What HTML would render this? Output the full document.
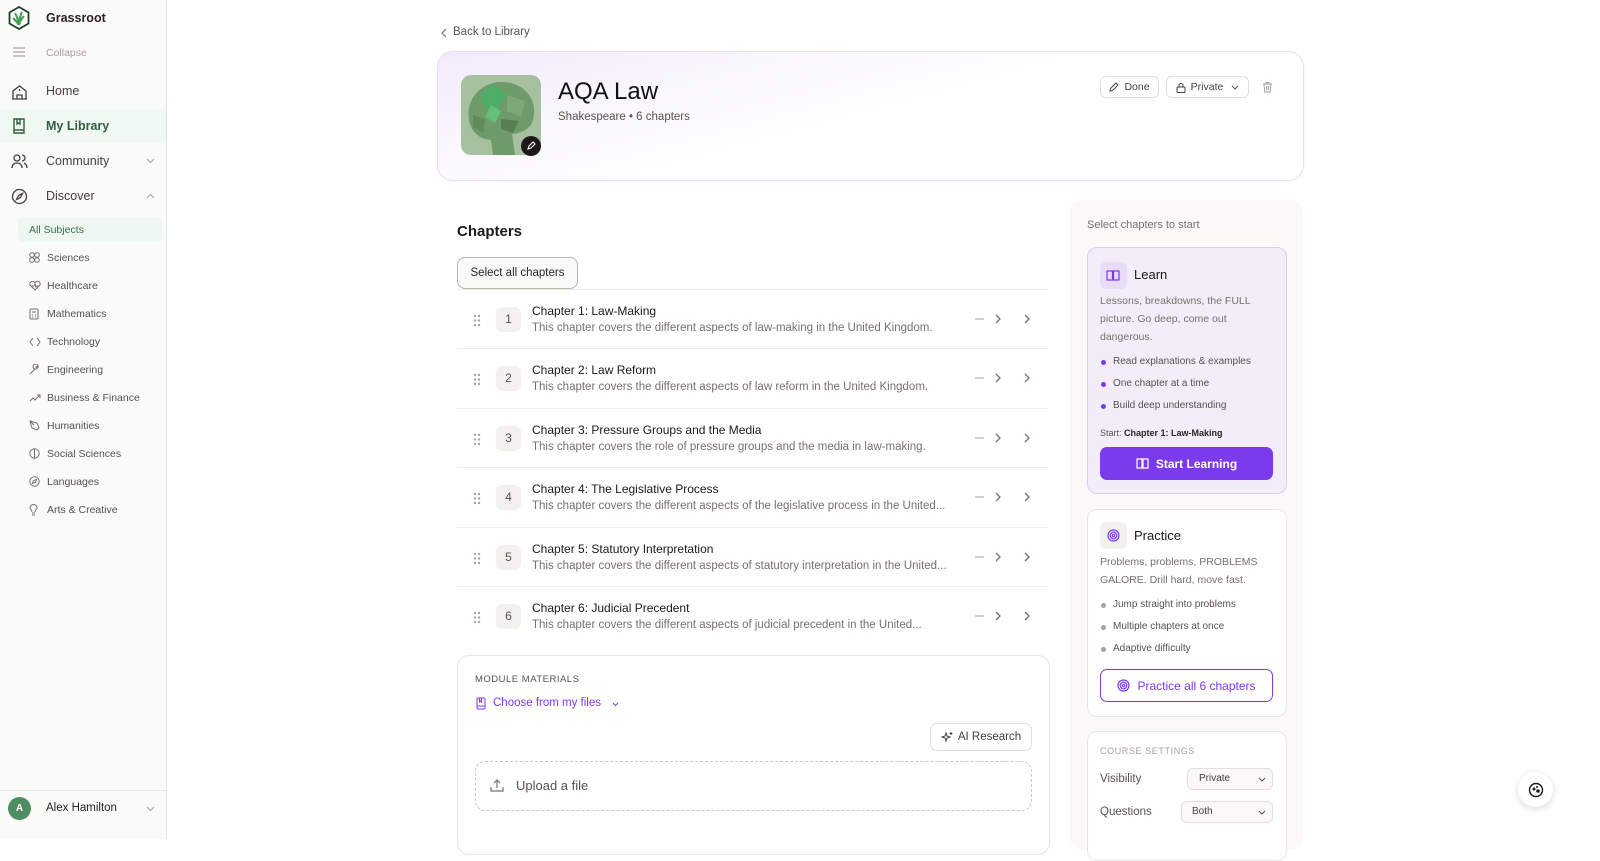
<!DOCTYPE html>
<html><head><meta charset="utf-8"><style>
*{box-sizing:border-box;margin:0;padding:0}
body{width:1600px;height:839px;overflow:hidden;background:#fff;font-family:"Liberation Sans",sans-serif;color:#1c1917;position:relative}
.a{position:absolute}
.sb{left:0;top:0;width:167px;height:839px;background:#fafaf9;border-right:1px solid #e7e5e4}
.nav{left:0;width:166px;height:34px;font-size:12.5px;color:#44403c;display:flex;align-items:center}
.nav span{position:absolute;left:46px}
.nav svg{position:absolute;left:11px}
.sub{left:18px;width:144px;height:25px;font-size:10.5px;color:#57534e;display:flex;align-items:center}
.sub span{position:absolute;left:29px}
.sub svg{position:absolute;left:11px}
.row{left:457px;width:591px;height:60px;border-top:1px solid #efedea}
.row .dr{position:absolute;left:16px;top:24px}
.row .n{position:absolute;left:39px;top:17px;width:25px;height:25px;background:#f3f1ee;border-radius:6px;font-size:12px;color:#57534e;text-align:center;line-height:25px}
.row .t{position:absolute;left:75px;top:14px;font-size:12px;color:#1c1917}
.row .d{position:absolute;left:75px;top:32px;font-size:11.5px;color:#78716c;white-space:nowrap}
.row .ic{position:absolute;left:516px;top:22px}
.btn{border:1px solid #e2dfdb;border-radius:6px;background:#fff;font-size:10.5px;color:#44403c;display:flex;align-items:center;justify-content:center;gap:5px}
.li{font-size:10px;color:#57534e;position:absolute;left:13px;white-space:nowrap}
.li:before{content:"";position:absolute;left:-12px;top:4px;width:5px;height:5px;border-radius:50%;background:#7c3aed}
.pr .li:before{background:#a8a29e}
</style></head><body>
<div class="a sb"></div>
<svg class="a" style="left:8px;top:6px" width="22" height="24" viewBox="0 0 22 24"><path d="M11 1L20.5 6.5V17.5L11 23L1.5 17.5V6.5Z" fill="#fff" stroke="#1f3d2b" stroke-width="1.8"/><path d="M11 19C10 14 9 10 7 7M11 19C11 14 12 10 14 6M11 19C12 15 14 12 16 10M11 19C9 16 7 14 5 12" stroke="#3f9d4f" stroke-width="2" fill="none"/></svg>
<div class="a" style="left:46px;top:11px;font-size:12.5px;font-weight:bold;color:#292524">Grassroot</div>
<svg class="a" style="left:13px;top:47px" width="12" height="10"><path d="M0 1H12M0 5H12M0 9H12" stroke="#a8a29e" stroke-width="1.2"/></svg>
<div class="a" style="left:46px;top:47px;font-size:10.5px;color:#a8a29e">Collapse</div>
<div class="a nav" style="top:74px"><svg width="17" height="17" viewBox="0 0 17 17" fill="none" stroke="#44403c" stroke-width="1.3"><path d="M2 16V8l6.5-5L15 8v8M6 16v-4h5v4M1 16h15M8.5 6v2"/></svg><span>Home</span></div>
<div class="a nav" style="top:109px;background:#f0f8f2;color:#2f5e3f;font-weight:bold"><svg width="16" height="16" viewBox="0 0 16 16" fill="none" stroke="#2f5e3f" stroke-width="1.4"><path d="M3 1h10v14H3zM3 12h10M6 1v5l1.5-1L9 6V1"/></svg><span>My Library</span></div>
<div class="a nav" style="top:144px"><svg width="17" height="16" viewBox="0 0 17 16" fill="none" stroke="#44403c" stroke-width="1.3"><circle cx="6" cy="5" r="3"/><path d="M1 15c0-3 2-5 5-5s5 2 5 5M11 2a3 3 0 010 6M13 10c2 1 3 3 3 5"/></svg><span>Community</span><svg style="left:146px" width="9" height="6"><path d="M1 1l3.5 3.5L8 1" stroke="#a8a29e" fill="none"/></svg></div>
<div class="a nav" style="top:179px"><svg width="17" height="17" viewBox="0 0 17 17" fill="none" stroke="#44403c" stroke-width="1.3"><circle cx="8.5" cy="8.5" r="7"/><path d="M11.5 5.5l-2 4-4 2 2-4z"/></svg><span>Discover</span><svg style="left:146px" width="9" height="6"><path d="M1 5l3.5-3.5L8 5" stroke="#a8a29e" fill="none"/></svg></div>
<div class="a sub" style="top:217px;background:#eef8f1;color:#3d6b4f;border-radius:5px"><span style="left:11px">All Subjects</span></div>
<div class="a sub" style="top:245px"><svg width="11" height="11" viewBox="0 0 11 11" fill="none" stroke="#78716c"><circle cx="3" cy="3" r="2.3"/><circle cx="8" cy="3" r="2.3"/><circle cx="3" cy="8" r="2.3"/><circle cx="8" cy="8" r="2.3"/></svg><span>Sciences</span></div>
<div class="a sub" style="top:273px"><svg width="12" height="10" viewBox="0 0 12 10" fill="none" stroke="#78716c"><path d="M6 9L1 4a2.5 2.5 0 015-2 2.5 2.5 0 015 2z M2 5h3l1-2 1 3 1-1h2"/></svg><span>Healthcare</span></div>
<div class="a sub" style="top:301px"><svg width="10" height="12" viewBox="0 0 10 12" fill="none" stroke="#78716c"><rect x="1" y="1" width="8" height="10" rx="1"/><path d="M3 4h4M3 7h1M6 7h1M3 9h1M6 9h1"/></svg><span>Mathematics</span></div>
<div class="a sub" style="top:329px"><svg width="12" height="10" viewBox="0 0 12 10" fill="none" stroke="#78716c"><path d="M4 1L1 5l3 4M8 1l3 4-3 4"/></svg><span>Technology</span></div>
<div class="a sub" style="top:357px"><svg width="11" height="11" viewBox="0 0 11 11" fill="none" stroke="#78716c"><path d="M1 10l5-5a2.5 2.5 0 113 -3l-2 1 1 1 1-2a2.5 2.5 0 01-3 3"/></svg><span>Engineering</span></div>
<div class="a sub" style="top:385px"><svg width="12" height="8" viewBox="0 0 12 8" fill="none" stroke="#78716c"><path d="M1 7l3-3 2 2 5-5M8 1h3v3"/></svg><span>Business &amp; Finance</span></div>
<div class="a sub" style="top:413px"><svg width="11" height="11" viewBox="0 0 11 11" fill="none" stroke="#78716c"><path d="M1 1l7 2 2 5-2 2-5-2zM1 1l4 4"/></svg><span>Humanities</span></div>
<div class="a sub" style="top:441px"><svg width="11" height="11" viewBox="0 0 11 11" fill="none" stroke="#78716c"><circle cx="5.5" cy="5.5" r="4.7"/><path d="M5.5 1v9"/></svg><span>Social Sciences</span></div>
<div class="a sub" style="top:469px"><svg width="11" height="11" viewBox="0 0 11 11" fill="none" stroke="#78716c"><circle cx="5.5" cy="5.5" r="4.7"/><path d="M7.5 3.5l-1 3-3 1 1-3z"/></svg><span>Languages</span></div>
<div class="a sub" style="top:497px"><svg width="9" height="12" viewBox="0 0 9 12" fill="none" stroke="#78716c"><path d="M3 9h3M3 11h3M3 8C3 6 1 5.5 1 4a3.5 3.5 0 017 0c0 1.5-2 2-2 4"/></svg><span>Arts &amp; Creative</span></div>
<div class="a" style="left:0;top:790px;width:166px;border-top:1px solid #e7e5e4"></div>
<div class="a" style="left:8px;top:797px;width:23px;height:23px;border-radius:50%;background:#4e8c64;color:#fff;font-size:10px;font-weight:bold;text-align:center;line-height:23px">A</div>
<div class="a" style="left:46px;top:802px;font-size:11.5px;color:#292524">Alex Hamilton</div>
<svg class="a" style="left:146px;top:806px" width="9" height="6"><path d="M1 1l3.5 3.5L8 1" stroke="#a8a29e" fill="none"/></svg>

<svg class="a" style="left:441px;top:28px" width="6" height="10"><path d="M5 1L1 5l4 4" stroke="#78716c" fill="none" stroke-width="1.2"/></svg>
<div class="a" style="left:453px;top:26px;font-size:11.5px;color:#57534e">Back to Library</div>

<div class="a" style="left:437px;top:51px;width:867px;height:130px;border:1px solid #e6dff3;border-radius:16px;background:linear-gradient(165deg,#f1eafb 0%,#faf8fe 30%,#fff 55%);box-shadow:0 1px 3px rgba(0,0,0,.04)"></div>
<div class="a" style="left:461px;top:75px;width:80px;height:80px;border-radius:10px;background:#a7c0a0;overflow:hidden"><svg width="80" height="80" viewBox="0 0 80 80"><path d="M8 45C4 25 20 6 42 7c20 1 33 15 31 33-1 12-10 18-22 19l3 21H32l-2-15C17 64 10 56 8 45z" fill="#6f9a6a"/><path d="M20 18l14-8 12 10-10 14-14-2z" fill="#4fae66"/><path d="M30 30l10 6-6 12-10-6z" fill="#63c07a"/><path d="M46 20l18 6-4 16-14-6z" fill="#7fa878"/><path d="M12 40l12 4-2 14-10-6z" fill="#5f8c5a"/><path d="M40 44l18 2-6 12-12-4z" fill="#577f52"/></svg></div>
<div class="a" style="left:521px;top:136px;width:20px;height:20px;border-radius:50%;background:#1c1917"><svg width="20" height="20"><path d="M7 13l1-3 4-4 2 2-4 4z" stroke="#fff" fill="none" stroke-width="1.1"/></svg></div>
<div class="a" style="left:558px;top:78px;font-size:24px;color:#111">AQA Law</div>
<div class="a" style="left:558px;top:111px;font-size:11.5px;color:#57534e">Shakespeare • 6 chapters</div>
<div class="a btn" style="left:1100px;top:76px;width:59px;height:22px"><svg width="10" height="10"><path d="M1 9l.5-2.5L7 1l2 2-5.5 5.5z" stroke="#44403c" fill="none"/></svg>Done</div>
<div class="a btn" style="left:1166px;top:76px;width:83px;height:22px"><svg width="10" height="11"><rect x="1" y="5" width="8" height="5.5" rx="1" stroke="#44403c" fill="none"/><path d="M3 5V3.5a2 2 0 014 0V5" stroke="#44403c" fill="none"/></svg>Private<svg width="8" height="5" style="margin-left:3px"><path d="M1 1l3 3 3-3" stroke="#57534e" fill="none"/></svg></div>
<svg class="a" style="left:1262px;top:81px" width="11" height="12"><path d="M1 3h9M4 3V1.5h3V3M2 3l.7 8h5.6L9 3M4.5 5v4M6.5 5v4" stroke="#a8a29e" fill="none"/></svg>

<div class="a" style="left:457px;top:223px;font-size:15px;font-weight:bold;color:#1c1917">Chapters</div>
<div class="a" style="left:457px;top:257px;width:121px;height:32px;border:1px solid #b9b4ae;border-radius:8px;background:#fafaf9;font-size:11.5px;color:#292524;text-align:center;line-height:30px">Select all chapters</div>

<div class="a row" style="top:289px"><svg class="dr" width="8" height="13"><g fill="#a8a29e"><circle cx="2" cy="2" r="1.2"/><circle cx="6" cy="2" r="1.2"/><circle cx="2" cy="6.5" r="1.2"/><circle cx="6" cy="6.5" r="1.2"/><circle cx="2" cy="11" r="1.2"/><circle cx="6" cy="11" r="1.2"/></g></svg><div class="n">1</div><div class="t">Chapter 1: Law-Making</div><div class="d">This chapter covers the different aspects of law-making in the United Kingdom.</div><svg class="ic" width="60" height="14"><path d="M2 7h9" stroke="#a8a29e"/><path d="M23 3l4 4-4 4" stroke="#78716c" fill="none" stroke-width="1.3"/><path d="M52 3l4 4-4 4" stroke="#78716c" fill="none" stroke-width="1.3"/></svg></div>
<div class="a row" style="top:348px"><svg class="dr" width="8" height="13"><g fill="#a8a29e"><circle cx="2" cy="2" r="1.2"/><circle cx="6" cy="2" r="1.2"/><circle cx="2" cy="6.5" r="1.2"/><circle cx="6" cy="6.5" r="1.2"/><circle cx="2" cy="11" r="1.2"/><circle cx="6" cy="11" r="1.2"/></g></svg><div class="n">2</div><div class="t">Chapter 2: Law Reform</div><div class="d">This chapter covers the different aspects of law reform in the United Kingdom.</div><svg class="ic" width="60" height="14"><path d="M2 7h9" stroke="#a8a29e"/><path d="M23 3l4 4-4 4" stroke="#78716c" fill="none" stroke-width="1.3"/><path d="M52 3l4 4-4 4" stroke="#78716c" fill="none" stroke-width="1.3"/></svg></div>
<div class="a row" style="top:408px"><svg class="dr" width="8" height="13"><g fill="#a8a29e"><circle cx="2" cy="2" r="1.2"/><circle cx="6" cy="2" r="1.2"/><circle cx="2" cy="6.5" r="1.2"/><circle cx="6" cy="6.5" r="1.2"/><circle cx="2" cy="11" r="1.2"/><circle cx="6" cy="11" r="1.2"/></g></svg><div class="n">3</div><div class="t">Chapter 3: Pressure Groups and the Media</div><div class="d">This chapter covers the role of pressure groups and the media in law-making.</div><svg class="ic" width="60" height="14"><path d="M2 7h9" stroke="#a8a29e"/><path d="M23 3l4 4-4 4" stroke="#78716c" fill="none" stroke-width="1.3"/><path d="M52 3l4 4-4 4" stroke="#78716c" fill="none" stroke-width="1.3"/></svg></div>
<div class="a row" style="top:467px"><svg class="dr" width="8" height="13"><g fill="#a8a29e"><circle cx="2" cy="2" r="1.2"/><circle cx="6" cy="2" r="1.2"/><circle cx="2" cy="6.5" r="1.2"/><circle cx="6" cy="6.5" r="1.2"/><circle cx="2" cy="11" r="1.2"/><circle cx="6" cy="11" r="1.2"/></g></svg><div class="n">4</div><div class="t">Chapter 4: The Legislative Process</div><div class="d">This chapter covers the different aspects of the legislative process in the United...</div><svg class="ic" width="60" height="14"><path d="M2 7h9" stroke="#a8a29e"/><path d="M23 3l4 4-4 4" stroke="#78716c" fill="none" stroke-width="1.3"/><path d="M52 3l4 4-4 4" stroke="#78716c" fill="none" stroke-width="1.3"/></svg></div>
<div class="a row" style="top:527px"><svg class="dr" width="8" height="13"><g fill="#a8a29e"><circle cx="2" cy="2" r="1.2"/><circle cx="6" cy="2" r="1.2"/><circle cx="2" cy="6.5" r="1.2"/><circle cx="6" cy="6.5" r="1.2"/><circle cx="2" cy="11" r="1.2"/><circle cx="6" cy="11" r="1.2"/></g></svg><div class="n">5</div><div class="t">Chapter 5: Statutory Interpretation</div><div class="d">This chapter covers the different aspects of statutory interpretation in the United...</div><svg class="ic" width="60" height="14"><path d="M2 7h9" stroke="#a8a29e"/><path d="M23 3l4 4-4 4" stroke="#78716c" fill="none" stroke-width="1.3"/><path d="M52 3l4 4-4 4" stroke="#78716c" fill="none" stroke-width="1.3"/></svg></div>
<div class="a row" style="top:586px"><svg class="dr" width="8" height="13"><g fill="#a8a29e"><circle cx="2" cy="2" r="1.2"/><circle cx="6" cy="2" r="1.2"/><circle cx="2" cy="6.5" r="1.2"/><circle cx="6" cy="6.5" r="1.2"/><circle cx="2" cy="11" r="1.2"/><circle cx="6" cy="11" r="1.2"/></g></svg><div class="n">6</div><div class="t">Chapter 6: Judicial Precedent</div><div class="d">This chapter covers the different aspects of judicial precedent in the United...</div><svg class="ic" width="60" height="14"><path d="M2 7h9" stroke="#a8a29e"/><path d="M23 3l4 4-4 4" stroke="#78716c" fill="none" stroke-width="1.3"/><path d="M52 3l4 4-4 4" stroke="#78716c" fill="none" stroke-width="1.3"/></svg></div>

<div class="a" style="left:457px;top:655px;width:593px;height:200px;border:1px solid #e7e5e4;border-radius:12px"></div>
<div class="a" style="left:475px;top:674px;font-size:9.5px;letter-spacing:.5px;color:#57534e">MODULE MATERIALS</div>
<svg class="a" style="left:476px;top:697px" width="10" height="13"><rect x="1" y="1" width="8" height="11" rx="1" stroke="#7c3aed" fill="none"/><path d="M1 9h8M3.5 1v4l1-1 1 1V1" stroke="#7c3aed" fill="none"/></svg>
<div class="a" style="left:493px;top:697px;font-size:11.5px;color:#7c3aed">Choose from my files</div>
<svg class="a" style="left:612px;top:702px" width="7" height="5"><path d="M1 1l2.5 2.5L6 1" stroke="#7c3aed" fill="none"/></svg>
<div class="a btn" style="left:930px;top:723px;width:102px;height:28px;font-size:11.5px;border-radius:7px"><svg width="12" height="12"><path d="M5 2l1 3 3 1-3 1-1 3-1-3-3-1 3-1zM10 1v3M8.5 2.5h3" stroke="#44403c" fill="none"/></svg>AI Research</div>
<div class="a" style="left:475px;top:761px;width:557px;height:50px;border:1.3px dashed #c9c5c0;border-radius:10px"></div>
<svg class="a" style="left:490px;top:778px" width="14" height="14"><path d="M7 10V2M4 5l3-3 3 3M1 9v4h12V9" stroke="#78716c" fill="none" stroke-width="1.2"/></svg>
<div class="a" style="left:516px;top:778px;font-size:13px;color:#57534e">Upload a file</div>

<div class="a" style="left:1070px;top:200px;width:233px;height:650px;background:#faf9f7;border-radius:12px"></div>
<div class="a" style="left:1087px;top:219px;font-size:11px;color:#78716c">Select chapters to start</div>
<div class="a" style="left:1087px;top:247px;width:200px;height:247px;background:#f3edfa;border:1px solid #dccbf5;border-radius:10px"></div>
<div class="a" style="left:1100px;top:262px;width:27px;height:27px;background:#e8dcf8;border-radius:6px"><svg width="27" height="27"><path d="M7 9h5.5v9H7zM13.5 9H19v9h-5.5z" stroke="#7c3aed" fill="none" stroke-width="1.2"/></svg></div>
<div class="a" style="left:1134px;top:267px;font-size:13px;color:#1c1917">Learn</div>
<div class="a" style="left:1100px;top:292px;width:180px;font-size:10.5px;line-height:18px;color:#78716c">Lessons, breakdowns, the FULL picture. Go deep, come out dangerous.</div>
<div class="a" style="left:1100px;top:356px"><div class="li">Read explanations &amp; examples</div></div>
<div class="a" style="left:1100px;top:378px"><div class="li">One chapter at a time</div></div>
<div class="a" style="left:1100px;top:400px"><div class="li">Build deep understanding</div></div>
<div class="a" style="left:1100px;top:428px;font-size:9px;color:#57534e;white-space:nowrap">Start: <b style="color:#292524">Chapter 1: Law-Making</b></div>
<div class="a" style="left:1100px;top:447px;width:173px;height:33px;background:#7c3aed;border-radius:7px;color:#fff;font-size:12px;font-weight:bold;display:flex;align-items:center;justify-content:center;gap:7px"><svg width="13" height="11"><path d="M1 1h5v9H1zM7 1h5v9H7z" stroke="#fff" fill="none" stroke-width="1.2"/></svg>Start Learning</div>

<div class="a pr" style="left:1087px;top:509px;width:200px;height:208px;background:#fff;border:1px solid #e7e5e4;border-radius:10px"></div>
<div class="a" style="left:1100px;top:522px;width:27px;height:27px;background:#f3f1ee;border-radius:6px"><svg width="27" height="27"><g stroke="#7c3aed" fill="none" stroke-width="1.2"><circle cx="13.5" cy="13.5" r="5.5"/><circle cx="13.5" cy="13.5" r="3.3"/><circle cx="13.5" cy="13.5" r="1.2"/></g></svg></div>
<div class="a" style="left:1134px;top:528px;font-size:13px;color:#1c1917">Practice</div>
<div class="a" style="left:1100px;top:553px;width:180px;font-size:10.5px;line-height:18px;color:#78716c">Problems, problems, PROBLEMS GALORE. Drill hard, move fast.</div>
<div class="a pr" style="left:1100px;top:599px"><div class="li">Jump straight into problems</div></div>
<div class="a pr" style="left:1100px;top:621px"><div class="li">Multiple chapters at once</div></div>
<div class="a pr" style="left:1100px;top:643px"><div class="li">Adaptive difficulty</div></div>
<div class="a" style="left:1100px;top:669px;width:173px;height:33px;border:1.5px solid #7c3aed;border-radius:7px;color:#7c3aed;font-size:12px;display:flex;align-items:center;justify-content:center;gap:7px"><svg width="13" height="13"><g stroke="#7c3aed" fill="none" stroke-width="1.2"><circle cx="6.5" cy="6.5" r="5.5"/><circle cx="6.5" cy="6.5" r="3.3"/><circle cx="6.5" cy="6.5" r="1.2"/></g></svg>Practice all 6 chapters</div>

<div class="a" style="left:1087px;top:731px;width:200px;height:130px;background:#fff;border:1px solid #e7e5e4;border-radius:10px"></div>
<div class="a" style="left:1100px;top:746px;font-size:9px;letter-spacing:.6px;color:#a8a29e">COURSE SETTINGS</div>
<div class="a" style="left:1100px;top:773px;font-size:11.5px;color:#57534e">Visibility</div>
<div class="a" style="left:1187px;top:768px;width:86px;height:22px;border:1px solid #e2dfdb;border-radius:6px;background:#faf9f7;font-size:10px;color:#44403c;padding-left:11px;line-height:20px">Private<svg style="position:absolute;right:6px;top:8px" width="8" height="5"><path d="M1 1l3 3 3-3" stroke="#57534e" fill="none"/></svg></div>
<div class="a" style="left:1100px;top:806px;font-size:11.5px;color:#57534e">Questions</div>
<div class="a" style="left:1181px;top:801px;width:92px;height:22px;border:1px solid #e2dfdb;border-radius:6px;background:#faf9f7;font-size:10px;color:#44403c;padding-left:10px;line-height:20px">Both<svg style="position:absolute;right:6px;top:8px" width="8" height="5"><path d="M1 1l3 3 3-3" stroke="#57534e" fill="none"/></svg></div>

<div class="a" style="left:1518px;top:772px;width:35px;height:35px;border-radius:50%;background:#fff;box-shadow:0 2px 8px rgba(0,0,0,.15);display:flex;align-items:center;justify-content:center"><svg width="16" height="16"><circle cx="8" cy="8" r="6.5" stroke="#1c1917" fill="none" stroke-width="1.4"/><circle cx="6" cy="7" r="1.5" fill="#1c1917"/><circle cx="10" cy="9" r="1.8" fill="#1c1917"/><circle cx="9" cy="5" r="1" fill="#1c1917"/></svg></div>
</body></html>
